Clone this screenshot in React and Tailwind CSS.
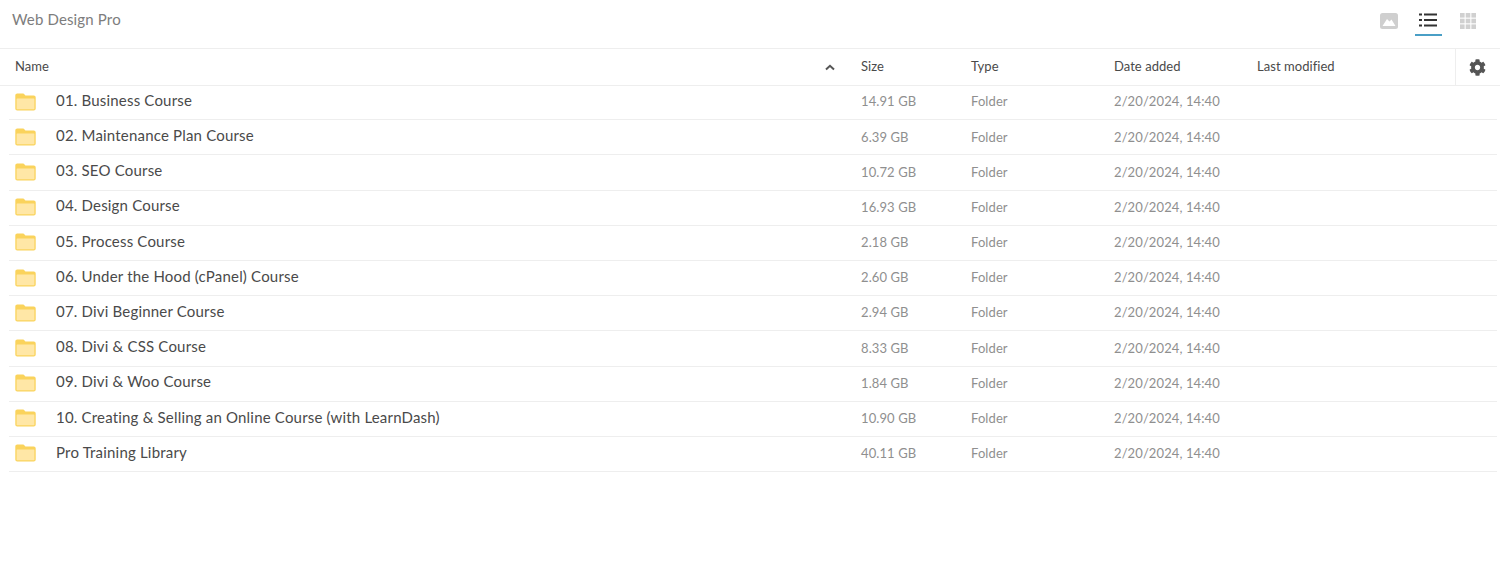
const rows = [
  ["01. Business Course", "14.91 GB"],
  ["02. Maintenance Plan Course", "6.39 GB"],
  ["03. SEO Course", "10.72 GB"],
  ["04. Design Course", "16.93 GB"],
  ["05. Process Course", "2.18 GB"],
  ["06. Under the Hood (cPanel) Course", "2.60 GB"],
  ["07. Divi Beginner Course", "2.94 GB"],
  ["08. Divi & CSS Course", "8.33 GB"],
  ["09. Divi & Woo Course", "1.84 GB"],
  ["10. Creating & Selling an Online Course (with LearnDash)", "10.90 GB"],
  ["Pro Training Library", "40.11 GB"],
];

function Folder() {
  return (
    <svg width="21" height="18" viewBox="0 0 21 18" className="shrink-0">
      <path d="M0.3 2.5C0.3 1.2 1.1 0.4 2.3 0.4H7.6C8.6 0.4 9.1 0.9 9.6 1.6L10.4 2.6H18.7C19.9 2.6 20.7 3.5 20.7 4.6V15.6C20.7 16.8 19.9 17.6 18.7 17.6H2.3C1.1 17.6 0.3 16.8 0.3 15.6Z" fill="#fad35c" />
      <rect x="1.6" y="5.6" width="17.8" height="10.7" rx="0.5" fill="#ffe7a6" />
    </svg>
  );
}

function ImageIcon() {
  return (
    <svg width="18" height="16" viewBox="0 0 18 16">
      <rect x="0" y="0" width="18" height="16" rx="2.5" fill="#cfcfcf" />
      <path d="M2.5 13L7 6L9.5 8.5L11.5 6.5L15.5 13Z" fill="#fff" />
    </svg>
  );
}

function ListIcon() {
  return (
    <svg width="18" height="14" viewBox="0 0 18 14" fill="#333">
      <rect x="0" y="0.5" width="3" height="2" />
      <rect x="5" y="0.5" width="13" height="2" />
      <rect x="0" y="6" width="3" height="2" />
      <rect x="5" y="6" width="13" height="2" />
      <rect x="0" y="11.5" width="3" height="2" />
      <rect x="5" y="11.5" width="13" height="2" />
    </svg>
  );
}

function GridIcon() {
  return (
    <svg width="16" height="16" viewBox="0 0 16 16" fill="#d0d0d0">
      <rect x="0" y="0" width="4.6" height="4.6" />
      <rect x="5.7" y="0" width="4.6" height="4.6" />
      <rect x="11.4" y="0" width="4.6" height="4.6" />
      <rect x="0" y="5.7" width="4.6" height="4.6" />
      <rect x="5.7" y="5.7" width="4.6" height="4.6" />
      <rect x="11.4" y="5.7" width="4.6" height="4.6" />
      <rect x="0" y="11.4" width="4.6" height="4.6" />
      <rect x="5.7" y="11.4" width="4.6" height="4.6" />
      <rect x="11.4" y="11.4" width="4.6" height="4.6" />
    </svg>
  );
}

function Gear() {
  return (
    <svg width="17" height="17" viewBox="0 0 512 512" fill="#555">
      <path d="M487.4 315.7l-42.6-24.6c4.3-23.2 4.3-47 0-70.2l42.6-24.6c4.9-2.8 7.1-8.6 5.5-14-11.1-35.6-30-67.8-54.7-94.6-3.8-4.1-10-5.1-14.8-2.3L380.8 110c-17.9-15.4-38.5-27.3-60.8-35.1V25.8c0-5.6-3.9-10.5-9.4-11.7-36.7-8.2-74.3-7.8-109.2 0-5.5 1.2-9.4 6.1-9.4 11.7V75c-22.2 7.9-42.8 19.8-60.8 35.1L88.7 85.5c-4.9-2.8-11-1.9-14.8 2.3-24.7 26.7-43.6 58.9-54.7 94.6-1.7 5.4.6 11.2 5.5 14L67.3 221c-4.3 23.2-4.3 47 0 70.2l-42.6 24.6c-4.9 2.8-7.1 8.6-5.5 14 11.1 35.6 30 67.8 54.7 94.6 3.8 4.1 10 5.1 14.8 2.3l42.6-24.6c17.9 15.4 38.5 27.3 60.8 35.1v49.2c0 5.6 3.9 10.5 9.4 11.7 36.7 8.2 74.3 7.8 109.2 0 5.5-1.2 9.4-6.1 9.4-11.7v-49.2c22.2-7.9 42.8-19.8 60.8-35.1l42.6 24.6c4.9 2.8 11 1.9 14.8-2.3 24.7-26.7 43.6-58.9 54.7-94.6 1.5-5.5-.7-11.3-5.6-14.1zM256 336c-44.1 0-80-35.9-80-80s35.9-80 80-80 80 35.9 80 80-35.9 80-80 80z" />
    </svg>
  );
}

export default function App() {
  return (
    <div className="w-[1500px] h-[575px] bg-white overflow-hidden font-['Lato','Noto_Sans',sans-serif]">
      <div className="h-[49px] flex justify-between border-b border-[#eeeeee]">
        <div className="pl-3 pt-[10px] text-[15px] leading-[18px] tracking-[0.15px] text-[#7d7d7d]">Web Design Pro</div>
        <div className="flex items-start pr-[24px] pt-[13px]">
          <ImageIcon />
          <div className="ml-[17px] -mt-[13px] h-[36px] w-[27px] flex justify-center pr-[1px] pt-[13px] border-b-2 border-[#4a9fc6]">
            <ListIcon />
          </div>
          <div className="ml-[18px]"><GridIcon /></div>
        </div>
      </div>
      <div className="h-[37px] flex items-center border-b border-[#eeeeee] text-[13px] tracking-[0.05px] text-[#4a4a4a]">
        <div className="w-[861px] pl-[15px] pr-[26px] flex items-center justify-between">
          <span>Name</span>
          <svg width="10" height="7" viewBox="0 0 10 7" fill="none" stroke="#555" strokeWidth="2"><path d="M1 5.5L5 1.8L9 5.5" /></svg>
        </div>
        <div className="w-[110px]">Size</div>
        <div className="w-[143px]">Type</div>
        <div className="w-[143px]">Date added</div>
        <div className="w-[198px]">Last modified</div>
        <div className="w-[45px] h-full flex items-center justify-center pr-[1px] border-l border-[#eeeeee]"><Gear /></div>
      </div>
      <div className="ml-[9px] mr-[3px] -mt-px">
        {rows.map(([name, size]) => (
          <div key={name} className="h-[35.2px] flex items-center border-b border-[#eeeeee] text-[13px] tracking-[0.1px] text-[#8f8f8f]">
            <div className="w-[852px] pl-[6px] flex items-center">
              <div className="pb-[1px]"><Folder /></div>
              <span className="ml-[20px] pb-[4px] text-[15px] tracking-[0.19px] text-[#4a4a4a]">{name}</span>
            </div>
            <div className="w-[110px]">{size}</div>
            <div className="w-[143px]">Folder</div>
            <div>2/20/2024, 14:40</div>
          </div>
        ))}
      </div>
    </div>
  );
}
